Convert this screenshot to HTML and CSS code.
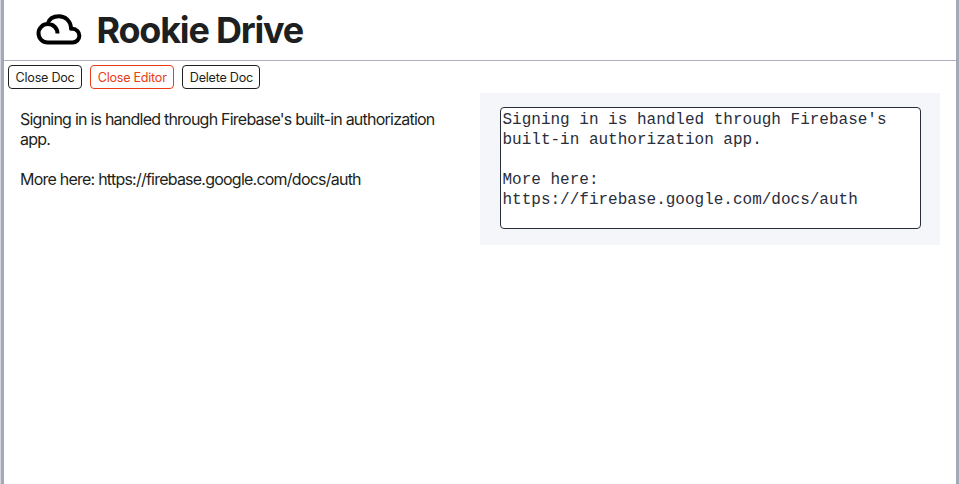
FILE: index.html
```html
<!DOCTYPE html>
<html lang="en">
<head>
<meta charset="utf-8">
<title>Rookie Drive</title>
<link rel="stylesheet" href="styles.css">
</head>
<body>
<div class="app">
  <header class="header">
    <svg class="logo" viewBox="0 0 45 32" fill="none" stroke="#000" stroke-width="4" stroke-linecap="butt" stroke-linejoin="round"><path d="M11 10C12.500 5 17 2.300 22.500 2.300c6.400 0 11.300 4.600 12 11v1.500h1.500a6.800 6.800 0 0 1 0 13.700H11.200a9.200 9.200 0 0 1 0-18.400c5.500 0 9.800 3.800 9.800 9.500"/></svg>
    <h1 class="title">Rookie Drive</h1>
  </header>
  <nav class="toolbar">
    <button class="btn">Close Doc</button>
    <button class="btn active">Close Editor</button>
    <button class="btn">Delete Doc</button>
  </nav>
  <main class="panes">
    <article class="doc">Signing in is handled through Firebase's built-in authorization app.

More here: https://firebase.google.com/docs/auth</article>
    <section class="editor"><div class="field">Signing in is handled through Firebase's built-in authorization app.

More here: https://firebase.google.com/docs/auth</div></section>
  </main>
</div>
</body>
</html>
```
FILE: styles.css
```css
* { box-sizing: border-box; }
body { margin: 0; padding: 0 1px; background: #d5d7df; color: #1d1f21; font-family: Inter, sans-serif; }
.app { height: 484px; background: #fff; border: solid #a4a9b8; border-width: 0 3px; }
.header { height: 61px; display: flex; align-items: center; gap: 16px; padding-left: 31.5px; border-bottom: 1px solid #aeb1bb; }
.logo { width: 46px; height: 32px; margin-right: -1px; }
.title { margin: 0; font-size: 36px; line-height: 60px; font-weight: 700; letter-spacing: -1.22px; }
.toolbar { display: flex; gap: 8px; padding: 4px 4px; height: 32px; }
.btn { height: 24px; padding: 0 6.6px; border: 1px solid #1d1f21; border-radius: 4px; background: #fff; color: #1d1f21; font: 400 12.6px Inter, sans-serif; letter-spacing: -0.25px; }
.active { color: #ea3c16; border-color: #ea3c16; }
.panes { display: flex; align-items: flex-start; }
.doc { width: 460px; margin-right: 16px; padding: 16px; font-size: 16px; font-weight: 380; line-height: 20px; letter-spacing: -0.77px; white-space: pre-wrap; }
.editor { width: 460px; height: 152px; padding: 14px 19px 16px 20px; background: #f5f6fa; }
.field { height: 122px; padding: 2px 1.5px; border: 1px solid #292e3b; border-radius: 4px; background: #fff; color: #292e3b; font: 16px/20px "Liberation Mono", monospace; white-space: pre-wrap; }
```
